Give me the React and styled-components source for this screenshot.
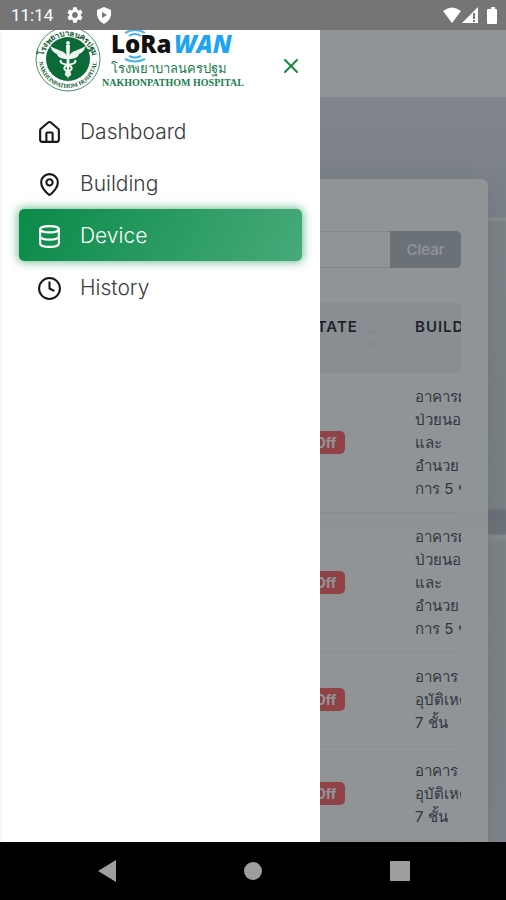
import styled, { createGlobalStyle } from "styled-components";
import { Home, MapPin, Database, Clock, X, ChevronUp, ChevronDown } from "lucide-react";

const GlobalStyle = createGlobalStyle`
  * {
    box-sizing: border-box;
  }
  body {
    margin: 0;
    font-family: Inter, "Noto Sans", "Liberation Sans", sans-serif;
    color: #43404f;
  }
  button {
    font-family: inherit;
    border: 0;
    padding: 0;
    cursor: pointer;
  }
`;

const Screen = styled.div`
  display: flex;
  flex-direction: column;
  height: 100vh;
  overflow: hidden;
`;

const StatusBar = styled.header`
  display: flex;
  align-items: center;
  justify-content: space-between;
  flex: none;
  height: 30px;
  padding: 0 8px 0 11px;
  background: #757575;
  color: #fff;
  font-family: Roboto, sans-serif;
  font-size: 17px;
  position: relative;
  z-index: 3;
`;

const StatusGroup = styled.div`
  display: flex;
  align-items: center;
  gap: ${(props) => props.$gap};
`;

const Main = styled.main`
  position: relative;
  flex: 1;
  min-height: 0;
  overflow: hidden;
`;

const Page = styled.div`
  height: 100%;
  overflow: hidden;
  background: linear-gradient(
    #dce0e5 0,
    #dde1e5 80px,
    #d2d6df 187px,
    #e9eced 188px,
    #e9eced 190px,
    #d5dadd 192px,
    #d0d7d8 478px,
    #b0b5be 482px,
    #b9bec4 504px,
    #e4e8ea 505px,
    #e0e5e6 510px,
    #d6dcdd 512px,
    #d3dadb 650px,
    #d8dce3 812px
  );
`;

const TopBar = styled.div`
  height: 67px;
  background: #fefefe;
`;

const Card = styled.section`
  margin: 82px 18px 0;
  padding: 52px 27px 27px;
  border-radius: 6px;
  background: rgba(255, 255, 255, 0.96);
  box-shadow: 0 4px 24px rgba(34, 41, 47, 0.12);
`;

const SearchRow = styled.form`
  display: flex;
  height: 37px;
  margin-bottom: 35px;
`;

const SearchInput = styled.input`
  flex: 1;
  min-width: 0;
  padding: 0 12px;
  border: 1px solid #e4e3e8;
  border-right: 0;
  border-radius: 5px 0 0 5px;
  background: #fff;
  font-family: inherit;
`;

const ClearButton = styled.button`
  width: 71px;
  border-radius: 0 5px 5px 0;
  background: #b4bbbe;
  color: #fff;
  font-size: 15px;
  font-weight: 500;
`;

const TableWrap = styled.div`
  overflow: hidden;
`;

const Table = styled.table`
  width: 560px;
  table-layout: fixed;
  border-collapse: collapse;
  font-size: 15px;
  line-height: 23px;
`;

const Th = styled.th`
  width: ${(props) => props.$width};
  padding: 12px 0 12px 24px;
  background: #f3f2f7;
  color: #1a1822;
  font-size: 15px;
  font-weight: 600;
  text-align: left;
`;

const HeadCell = styled.span`
  display: flex;
  gap: 7px;
  height: 46px;
  letter-spacing: 1px;
`;

const Sorter = styled.span`
  display: flex;
  flex-direction: column;
  align-self: center;
  color: #b0aebb;
`;

const Td = styled.td`
  padding: 12px 0 12px 24px;
  border-bottom: 1px solid #f1f0f5;
  white-space: pre;
`;

const Badge = styled.span`
  display: inline-block;
  padding: 0 9px;
  border-radius: 5px;
  background: #ff5a5f;
  color: #fff;
  font-size: 14px;
  font-weight: 700;
`;

const Backdrop = styled.div`
  position: absolute;
  inset: 0;
  background: rgba(34, 41, 47, 0.5);
`;

const Drawer = styled.aside`
  position: absolute;
  top: 0;
  bottom: 0;
  left: 0;
  width: 320px;
  background: #fff;
  border-left: 2px solid #f6f6f6;
`;

const DrawerHeader = styled.div`
  display: flex;
  align-items: flex-start;
  justify-content: space-between;
  height: 75px;
  padding: 0 17px 0 32px;
`;

const LogoLink = styled.a`
  display: block;
  height: 66px;
`;

const CloseButton = styled.button`
  display: flex;
  margin-top: 24px;
  background: none;
  color: #12893f;
`;

const Menu = styled.nav`
  display: flex;
  flex-direction: column;
  padding: 0 18px 0 17px;
`;

const MenuItem = styled.a`
  display: flex;
  align-items: center;
  gap: 18px;
  height: 52px;
  padding: 0 18px;
  border-radius: 5px;
  color: ${(props) => (props.$active ? "#fff" : "#3c3a40")};
  background: ${(props) =>
    props.$active ? "linear-gradient(118deg, #0a8a48, #47aa7a)" : "none"};
  box-shadow: ${(props) =>
    props.$active ? "0 0 10px 1px rgba(10, 138, 72, 0.6)" : "none"};
  font-size: 21px;
  font-weight: 300;
  text-decoration: none;

  svg {
    flex: none;
    margin-top: 2px;
    color: ${(props) => (props.$active ? "#fff" : "#17161a")};
  }
`;

const NavBar = styled.footer`
  display: flex;
  align-items: center;
  justify-content: space-around;
  flex: none;
  height: 58px;
  padding: 0 32px 0 34px;
  background: #000;
  position: relative;
  z-index: 3;
`;

const NavButton = styled.button`
  display: flex;
  background: none;
`;

const menu = [
  { name: "Dashboard", icon: Home },
  { name: "Building", icon: MapPin },
  { name: "Device", icon: Database },
  { name: "History", icon: Clock },
];

const devices = [
  { id: 1, state: "Off", building: "อาคารผู้\nป่วยนอก\nและ\nอำนวย\nการ 5 ชั้น" },
  { id: 2, state: "Off", building: "อาคารผู้\nป่วยนอก\nและ\nอำนวย\nการ 5 ชั้น" },
  { id: 3, state: "Off", building: "อาคาร\nอุบัติเหตุ\n7 ชั้น" },
  { id: 4, state: "Off", building: "อาคาร\nอุบัติเหตุ\n7 ชั้น" },
];

function Logo() {
  return (
    <svg width="212" height="66" viewBox="0 0 212 66" role="img" aria-label="LoRaWAN">
      <defs>
        <path id="ringTop" d="M9 31 A25 25 0 0 1 59 31" />
        <path id="ringBottom" d="M5 29 A29 29 0 0 0 63 29" />
      </defs>
      <circle cx="34" cy="29" r="32" fill="#fff" stroke="#4b8f69" strokeWidth="1" />
      <circle cx="34" cy="29" r="22" fill="#0b6a38" />
      <g fill="#0b5a30" fontFamily="'Liberation Serif', 'Noto Sans', serif" fontWeight="700" textAnchor="middle">
        <text fontSize="8">
          <textPath href="#ringTop" startOffset="50%">โรงพยาบาลนครปฐม</textPath>
        </text>
        <text fontSize="6">
          <textPath href="#ringBottom" startOffset="50%">NAKHONPATHOM HOSPITAL</textPath>
        </text>
      </g>
      <g fill="#eef6f0">
        <circle cx="34" cy="13" r="2" />
        <path d="M32 15 h4 l-1 28 l-1 7 l-1 -7 z" />
        <path d="M33 26 C30 20 24 21 16 16 C18 21 20 23 23 24 C23 27 28 29 33 29 z" />
        <path d="M35 26 C38 20 44 21 52 16 C50 21 48 23 45 24 C45 27 40 29 35 29 z" />
      </g>
      <path
        d="M27 30 C25 34 32 34 36 36 C40 38 36 41 34 42 C31 43 31 45 34 46 M41 30 C43 34 36 34 32 36 C28 38 32 41 34 42 C37 43 37 45 34 46"
        fill="none"
        stroke="#eef6f0"
        strokeWidth="2"
      />
      <g fontFamily="'Open Sans', 'Liberation Sans', sans-serif" fontWeight="800" fontSize="24">
        <text x="77" y="23" fill="#111">LoRa</text>
        <text x="140" y="23" fill="#1da6ef" fontStyle="italic">WAN</text>
      </g>
      <g fill="none" stroke="#45b4f0" strokeWidth="2">
        <path d="M91 3 Q101 -3 111 3" />
        <path d="M95 6 Q101 2 107 6" />
        <path d="M95 26 Q101 29 107 26" />
        <path d="M91 29 Q101 34 111 29" />
      </g>
      <text x="77" y="43" fill="#16804a" fontSize="13" fontFamily="'Liberation Serif', serif">
        โรงพยาบาลนครปฐม
      </text>
      <text x="68" y="56" fill="#16804a" fontSize="10" fontWeight="700" fontFamily="'Liberation Serif', serif">
        NAKHONPATHOM HOSPITAL
      </text>
    </svg>
  );
}

function StatusIcons() {
  return (
    <StatusGroup $gap="1px">
      <svg width="18" height="16" viewBox="0 0 18 16" fill="#fff">
        <path d="M0 4 Q9 -3 18 4 L9 16 z" />
      </svg>
      <svg width="16" height="16" viewBox="0 0 16 16">
        <path d="M16 0 V16 H0 z" fill="#fff" />
        <path d="M11 6 h2 v6 h-2 z M11 13 h2 v2 h-2 z" fill="#757575" />
      </svg>
      <svg width="19" height="17" viewBox="0 0 19 17" fill="#fff">
        <path d="M9 2 h3 v-2 h4 v2 h1 q1 0 1 1 v13 q0 1 -1 1 h-8 q-1 0 -1 -1 v-13 q0 -1 1 -1 z" />
      </svg>
    </StatusGroup>
  );
}

export default function App() {
  return (
    <>
      <GlobalStyle />
      <Screen>
        <StatusBar>
          <StatusGroup $gap="14px">
            <span>11:14</span>
            <svg width="16" height="16" viewBox="2 2 20 20" fill="#fff">
              <path d="M19.140 12.940c.04-.3.060-.61.060-.94 0-.32-.02-.64-.07-.94l2.030-1.580a.49.49 0 0 0 .12-.61l-1.920-3.320a.488.488 0 0 0-.59-.22l-2.390.96c-.5-.38-1.030-.7-1.620-.94l-.36-2.540a.484.484 0 0 0-.48-.41h-3.840c-.24 0-.43.17-.47.41l-.36 2.540c-.59.24-1.130.57-1.620.94l-2.390-.96c-.22-.08-.47 0-.59.22L2.740 8.870c-.12.21-.08.47.12.61l2.030 1.580c-.05.3-.09.63-.09.94s.02.64.07.94l-2.030 1.580a.49.49 0 0 0-.12.61l1.920 3.320c.12.22.37.29.59.22l2.390-.96c.5.38 1.030.7 1.620.94l.36 2.540c.05.24.24.41.48.41h3.840c.24 0 .44-.17.47-.41l.36-2.540c.59-.24 1.130-.56 1.620-.94l2.390.96c.22.08.47 0 .59-.22l1.920-3.320c.12-.22.07-.47-.12-.61l-2.010-1.580zM12 15.600A3.610 3.610 0 0 1 8.400 12c0-1.980 1.620-3.600 3.600-3.600s3.600 1.620 3.600 3.600-1.620 3.600-3.600 3.600z" />
            </svg>
            <svg width="14" height="17" viewBox="0 0 14 17">
              <path d="M7 0 L14 3 V8 Q13 14 7 17 Q1 14 0 8 V3 z" fill="#fff" />
              <path d="M5 5 L10 8 L5 11 z" fill="#757575" />
            </svg>
          </StatusGroup>
          <StatusIcons />
        </StatusBar>

        <Main>
          <Page>
            <TopBar />
            <Card>
              <SearchRow>
                <SearchInput type="text" aria-label="Search" />
                <ClearButton type="button">Clear</ClearButton>
              </SearchRow>
              <TableWrap>
                <Table>
                  <thead>
                    <tr>
                      <Th $width="237px" />
                      <Th $width="109px">
                        <HeadCell>
                          STATE
                          <Sorter>
                            <ChevronUp size={12} strokeWidth={1} />
                            <ChevronDown size={12} strokeWidth={1} />
                          </Sorter>
                        </HeadCell>
                      </Th>
                      <Th>
                        <HeadCell>BUILDING</HeadCell>
                      </Th>
                    </tr>
                  </thead>
                  <tbody>
                    {devices.map((device) => (
                      <tr key={device.id}>
                        <Td />
                        <Td>
                          <Badge>{device.state}</Badge>
                        </Td>
                        <Td>{device.building}</Td>
                      </tr>
                    ))}
                  </tbody>
                </Table>
              </TableWrap>
            </Card>
          </Page>

          <Backdrop />

          <Drawer>
            <DrawerHeader>
              <LogoLink href="#">
                <Logo />
              </LogoLink>
              <CloseButton type="button" aria-label="Close menu">
                <X size={24} strokeWidth={2} />
              </CloseButton>
            </DrawerHeader>
            <Menu>
              {menu.map(({ name, icon: Icon }) => (
                <MenuItem key={name} href="#" $active={name === "Device"}>
                  <Icon size={25} strokeWidth={2} />
                  {name}
                </MenuItem>
              ))}
            </Menu>
          </Drawer>
        </Main>

        <NavBar>
          <NavButton type="button" aria-label="Back">
            <svg width="18" height="22" viewBox="0 0 18 22" fill="#9e9e9e">
              <path d="M0 11 L18 0 V22 z" />
            </svg>
          </NavButton>
          <NavButton type="button" aria-label="Home">
            <svg width="18" height="18" viewBox="0 0 18 18" fill="#9e9e9e">
              <circle cx="9" cy="9" r="9" />
            </svg>
          </NavButton>
          <NavButton type="button" aria-label="Recent apps">
            <svg width="20" height="20" viewBox="0 0 20 20" fill="#9e9e9e">
              <rect width="20" height="20" rx="1" />
            </svg>
          </NavButton>
        </NavBar>
      </Screen>
    </>
  );
}
